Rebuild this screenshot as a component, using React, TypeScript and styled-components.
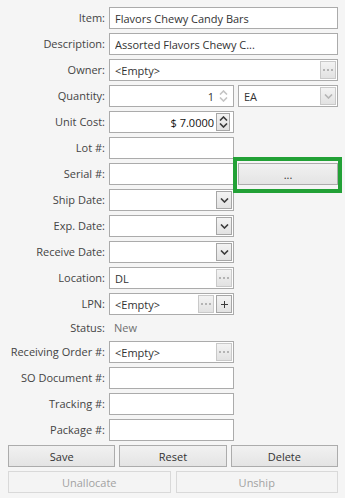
import React from "react";
import styled, { createGlobalStyle } from "styled-components";

const GlobalStyle = createGlobalStyle`
  html, body {
    margin: 0;
    background: #f5f5f5;
  }
  body {
    font-family: "Open Sans", "Noto Sans", sans-serif;
    font-size: 11px;
    color: #333;
  }
`;

const Panel = styled.div`
  display: grid;
  grid-template-columns: 97px 125px 100px;
  column-gap: 4px;
  row-gap: 4px;
  padding: 7px 7px 5px 8px;
`;

const Label = styled.div<{ $short?: boolean }>`
  grid-column: 1;
  justify-self: end;
  white-space: nowrap;
  line-height: ${p => (p.$short ? "18px" : "22px")};
  color: #444;
`;

const StatusText = styled.div`
  line-height: 18px;
  padding-left: 5px;
  color: #6f6f6f;
`;

const Box = styled.div<{ $span?: number }>`
  grid-column: span ${p => p.$span ?? 1};
  height: 22px;
  box-sizing: border-box;
  border: 1px solid #ababab;
  background: #fff;
  display: flex;
  align-items: center;
  gap: 2px;
  padding: 0 1px 0 5px;
  min-width: 0;
`;

const Value = styled.span<{ $right?: boolean; $dark?: boolean }>`
  flex: 1;
  min-width: 0;
  white-space: nowrap;
  overflow: hidden;
  text-align: ${p => (p.$right ? "right" : "left")};
  color: ${p => (p.$dark ? "#111" : "#333")};
`;

const MiniButton = styled.div<{ $disabled?: boolean }>`
  flex: none;
  width: 16px;
  height: 18px;
  box-sizing: border-box;
  border: 1px solid ${p => (p.$disabled ? "#c9c9c9" : "#a6a6a6")};
  background: linear-gradient(#f3f3f3, #e2e2e2);
  display: flex;
  align-items: center;
  justify-content: center;
  color: ${p => (p.$disabled ? "#b4b4b4" : "#3a3a3a")};
`;

const Spinner = styled.div<{ $framed?: boolean }>`
  flex: none;
  width: 14px;
  height: 18px;
  box-sizing: border-box;
  border: 1px solid ${p => (p.$framed ? "#a6a6a6" : "transparent")};
  background: ${p => (p.$framed ? "linear-gradient(#f3f3f3, #e2e2e2)" : "transparent")};
  display: flex;
  flex-direction: column;
  align-items: center;
  justify-content: center;
  gap: 2px;
  color: ${p => (p.$framed ? "#3a3a3a" : "#c4c4c4")};
  margin-right: 2px;
`;

const SerialSlot = styled.div`
  position: relative;
  display: flex;
`;

const Highlight = styled.div`
  position: absolute;
  top: -6px;
  left: -5px;
  right: -4px;
  bottom: -8px;
  border: 4px solid #22a136;
  pointer-events: none;
`;

const ActionButton = styled.button<{ $disabled?: boolean }>`
  height: 22px;
  width: 100%;
  box-sizing: border-box;
  margin: 0;
  padding: 0;
  font: inherit;
  border: 1px solid ${p => (p.$disabled ? "#d9d9d9" : "#acacac")};
  background: ${p => (p.$disabled ? "#f4f4f4" : "linear-gradient(#f1f1f1, #e4e4e4)")};
  color: ${p => (p.$disabled ? "#a2a2a2" : "#333")};
`;

const ButtonRow = styled.div<{ $cols: number; $gap: number }>`
  grid-column: 1 / -1;
  display: grid;
  grid-template-columns: repeat(${p => p.$cols}, 1fr);
  column-gap: ${p => p.$gap}px;
`;

const Dots = () => (
  <svg width="10" height="3" viewBox="0 0 10 3">
    <rect x="0" y="0" width="2" height="2" fill="currentColor" />
    <rect x="4" y="0" width="2" height="2" fill="currentColor" />
    <rect x="8" y="0" width="2" height="2" fill="currentColor" />
  </svg>
);

const Chevron = ({ up }: { up?: boolean }) => (
  <svg width="9" height="5" viewBox="0 0 9 5">
    <path
      d={up ? "M1 4.5 L4.5 1 L8 4.5" : "M1 0.5 L4.5 4 L8 0.5"}
      fill="none"
      stroke="currentColor"
      strokeWidth="1.6"
    />
  </svg>
);

const Plus = () => (
  <svg width="7" height="7" viewBox="0 0 7 7">
    <path d="M0 3.5 H7 M3.5 0 V7" stroke="currentColor" strokeWidth="1" />
  </svg>
);

const DateField = () => (
  <Box>
    <Value />
    <MiniButton>
      <Chevron />
    </MiniButton>
  </Box>
);

const LookupField = ({ value, extra }: { value: string; extra?: boolean }) => (
  <Box $span={extra ? 2 : 1}>
    <Value>{value}</Value>
    <MiniButton $disabled>
      <Dots />
    </MiniButton>
  </Box>
);

export default function App() {
  return (
    <>
      <GlobalStyle />
      <Panel>
        <Label>Item:</Label>
        <Box $span={2}>
          <Value>Flavors Chewy Candy Bars</Value>
        </Box>

        <Label>Description:</Label>
        <Box $span={2}>
          <Value>Assorted Flavors Chewy C...</Value>
        </Box>

        <Label>Owner:</Label>
        <LookupField value="<Empty>" extra />

        <Label>Quantity:</Label>
        <Box>
          <Value $right>1</Value>
          <Spinner>
            <Chevron up />
            <Chevron />
          </Spinner>
        </Box>
        <Box>
          <Value>EA</Value>
          <MiniButton $disabled>
            <Chevron />
          </MiniButton>
        </Box>

        <Label>Unit Cost:</Label>
        <Box>
          <Value $right $dark>
            $ 7.0000
          </Value>
          <Spinner $framed>
            <Chevron up />
            <Chevron />
          </Spinner>
        </Box>

        <Label>Lot #:</Label>
        <Box />

        <Label>Serial #:</Label>
        <Box />
        <SerialSlot>
          <ActionButton>...</ActionButton>
          <Highlight />
        </SerialSlot>

        <Label>Ship Date:</Label>
        <DateField />

        <Label>Exp. Date:</Label>
        <DateField />

        <Label>Receive Date:</Label>
        <DateField />

        <Label>Location:</Label>
        <LookupField value="DL" />

        <Label>LPN:</Label>
        <Box>
          <Value>{"<Empty>"}</Value>
          <MiniButton $disabled>
            <Dots />
          </MiniButton>
          <MiniButton>
            <Plus />
          </MiniButton>
        </Box>

        <Label $short>Status:</Label>
        <StatusText>New</StatusText>

        <Label>Receiving Order #:</Label>
        <LookupField value="<Empty>" />

        <Label>SO Document #:</Label>
        <Box />

        <Label>Tracking #:</Label>
        <Box />

        <Label>Package #:</Label>
        <Box />

        <ButtonRow $cols={3} $gap={4}>
          <ActionButton>Save</ActionButton>
          <ActionButton>Reset</ActionButton>
          <ActionButton>Delete</ActionButton>
        </ButtonRow>
        <ButtonRow $cols={2} $gap={5}>
          <ActionButton $disabled>Unallocate</ActionButton>
          <ActionButton $disabled>Unship</ActionButton>
        </ButtonRow>
      </Panel>
    </>
  );
}
